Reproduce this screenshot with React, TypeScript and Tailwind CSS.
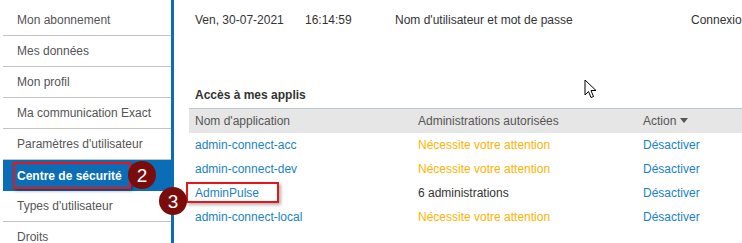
import React from "react";

const menu = [
  "Mon abonnement",
  "Mes données",
  "Mon profil",
  "Ma communication Exact",
  "Paramètres d'utilisateur",
  "Centre de sécurité",
  "Types d'utilisateur",
  "Droits",
];

const apps = [
  { name: "admin-connect-acc", admin: null },
  { name: "admin-connect-dev", admin: null },
  { name: "AdminPulse", admin: "6 administrations" },
  { name: "admin-connect-local", admin: null },
];

function Marker({ n, className }: { n: string; className: string }) {
  return (
    <div
      className={
        "absolute w-[28px] h-[28px] rounded-full bg-[#7a0c0c] text-white text-[19px] leading-none flex items-center justify-center " +
        className
      }
    >
      {n}
    </div>
  );
}

export default function App() {
  return (
    <div
      className="relative w-[742px] h-[243px] overflow-hidden bg-white text-[12px] text-[#444]"
      style={{ fontFamily: '"Liberation Sans", Arial, sans-serif' }}
    >
      <div className="flex h-full">
        {/* sidebar */}
        <div className="w-[174px] shrink-0 pl-[3px] pt-[5px] border-r-[3px] border-[#0b6db5]">
          {menu.map((m) =>
            m === "Centre de sécurité" ? (
              <div
                key={m}
                className="h-[31px] flex items-center pl-[14px] bg-[#0b6db5] text-white font-bold"
              >
                {m}
              </div>
            ) : (
              <div
                key={m}
                className="h-[31px] flex items-center pl-[14px] border-b border-[#c4c4c4] text-[#555]"
              >
                {m}
              </div>
            )
          )}
        </div>

        {/* main */}
        <div className="flex-1 pl-[15px]">
          <div className="h-[40px] flex items-center pl-[6px] whitespace-nowrap text-[#333]">
            <span className="w-[110px]">Ven, 30-07-2021</span>
            <span className="w-[90px]">16:14:59</span>
            <span className="w-[296px]">Nom d'utilisateur et mot de passe</span>
            <span>Connexion</span>
          </div>
          <div className="h-[68px] flex items-end pb-[4px] pl-[6px] text-[#333] font-bold">
            Accès à mes applis
          </div>
          <div className="border-t border-[#b9c9d1]">
            <div className="grid grid-cols-[223px_225px_1fr] h-[24px] bg-[#e6e6e6] text-[#555] items-center">
              <div className="px-[6px]">Nom d'application</div>
              <div className="px-[6px]">Administrations autorisées</div>
              <div className="px-[6px] flex items-center gap-[4px]">
                Action
                <svg width="8" height="6" viewBox="0 0 8 6">
                  <path d="M0 0H8L4 5Z" fill="#555" />
                </svg>
              </div>
            </div>
            {apps.map((a) => (
              <div key={a.name} className="grid grid-cols-[223px_225px_1fr] h-[24px] items-center">
                <div className="px-[6px] text-[#1a82c4]">{a.name}</div>
                <div className="px-[6px]">
                  {a.admin ? (
                    <span className="text-[#333]">{a.admin}</span>
                  ) : (
                    <span className="text-[#ffb300]">Nécessite votre attention</span>
                  )}
                </div>
                <div className="px-[6px] text-[#1a82c4]">Désactiver</div>
              </div>
            ))}
          </div>
        </div>
      </div>

      {/* annotations */}
      <div className="absolute left-[13px] top-[162px] w-[118px] h-[27px] border-2 border-[#e8151b] shadow-[2px_2px_3px_rgba(0,0,0,0.35)]" />
      <div className="absolute left-[186px] top-[182px] w-[93px] h-[21px] border-2 border-[#e8151b] shadow-[2px_2px_3px_rgba(0,0,0,0.3)]" />
      <Marker n="2" className="left-[128px] top-[161px]" />
      <Marker n="3" className="left-[159px] top-[187px]" />

      {/* mouse cursor */}
      <svg className="absolute left-[584px] top-[79px]" width="14" height="20" viewBox="0 0 14 20">
        <path
          d="M1 1V16L4.5 12.5L7 18.5L9.5 17.5L7 11.5H12Z"
          fill="#fff"
          stroke="#000"
          strokeWidth="1"
          strokeLinejoin="round"
        />
      </svg>
    </div>
  );
}
